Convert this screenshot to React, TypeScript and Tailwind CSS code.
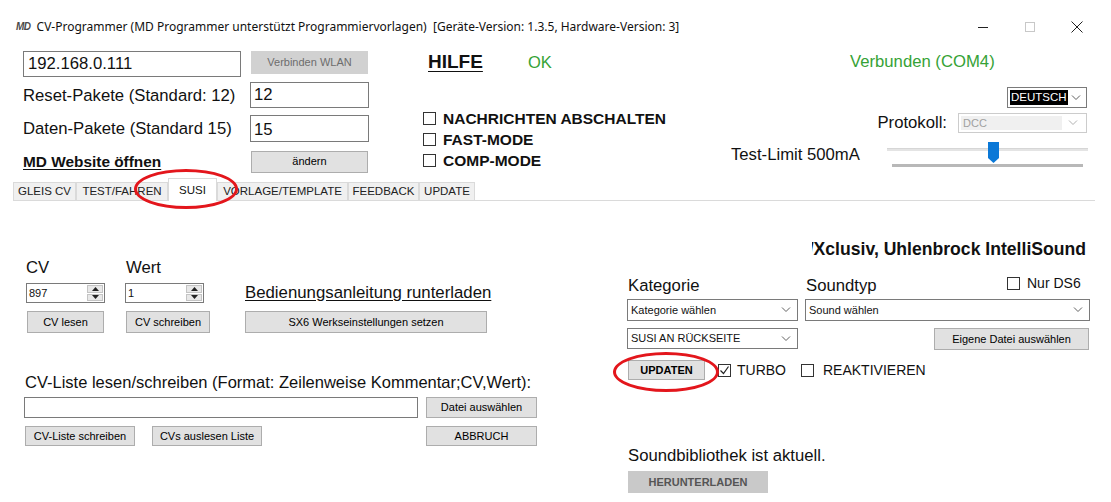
import type { ReactNode } from 'react'

function Btn({ className, children }: { className: string; children: ReactNode }) {
  return (
    <div
      className={`flex items-center justify-center border border-[#adadad] bg-[#e1e1e1] text-[11px] text-black ${className}`}
    >
      {children}
    </div>
  )
}

function Box({ checked = false }: { checked?: boolean }) {
  return (
    <span className="flex h-[13px] w-[13px] shrink-0 items-center justify-center border border-[#333] bg-white">
      {checked && (
        <svg width="11" height="11" viewBox="0 0 11 11">
          <path d="M1.5 5.5l3 3 5-7" fill="none" stroke="#222" strokeWidth="1.2" />
        </svg>
      )}
    </span>
  )
}

function Chevron({ color = '#606060' }: { color?: string }) {
  return (
    <svg width="10" height="6" viewBox="0 0 10 6" className="shrink-0">
      <path d="M1 0.5l4 4 4-4" fill="none" stroke={color} strokeWidth="1" />
    </svg>
  )
}

function Combo({ className, children }: { className: string; children: ReactNode }) {
  return (
    <div className={`flex items-center border border-[#7a7a7a] bg-white pl-[3px] pr-[6px] text-[11px] ${className}`}>
      <span className="flex-1 truncate">{children}</span>
      <Chevron />
    </div>
  )
}

function Spin({ className, value }: { className: string; value: string }) {
  return (
    <div className={`flex items-stretch border border-[#7a7a7a] bg-white text-[11px] ${className}`}>
      <span className="flex flex-1 items-center pl-[2px]">{value}</span>
      <span className="my-[1px] mr-[1px] flex w-[16px] flex-col gap-[1px]">
        <span className="flex flex-1 items-center justify-center border border-[#c4c4c4] bg-[#e8e8e8]">
          <svg width="7" height="4" viewBox="0 0 7 4">
            <path d="M0 4l3.5-4 3.5 4z" fill="#222" />
          </svg>
        </span>
        <span className="flex flex-1 items-center justify-center border border-[#c4c4c4] bg-[#e8e8e8]">
          <svg width="7" height="4" viewBox="0 0 7 4">
            <path d="M0 0l3.5 4 3.5-4z" fill="#222" />
          </svg>
        </span>
      </span>
    </div>
  )
}

const TABS = [
  { label: 'GLEIS CV', w: 'w-[63px]' },
  { label: 'TEST/FAHREN', w: 'w-[92px]' },
  { label: 'SUSI', w: 'w-[49px]', active: true },
  { label: 'VORLAGE/TEMPLATE', w: 'w-[131px]' },
  { label: 'FEEDBACK', w: 'w-[71px]' },
  { label: 'UPDATE', w: 'w-[56px]' },
]

export default function App() {
  return (
    <div className="relative h-[502px] w-[1111px] overflow-hidden bg-white font-['Liberation_Sans',Arial,sans-serif] text-[#111]">
      {/* title bar */}
      <div className="flex h-[51px] items-start">
        <span className="ml-[16px] mt-[21px] text-[10px] font-black italic leading-[12px] tracking-[-0.5px] text-[#4a4a4a]">
          MD
        </span>
        <span className="ml-[6px] mt-[19px] whitespace-nowrap font-['Noto_Sans',sans-serif] text-[12px] leading-[16px] text-[#111]">
          CV-Programmer (MD Programmer unterstützt Programmiervorlagen)&nbsp;&nbsp;[Geräte-Version: 1.3.5, Hardware-Version: 3]
        </span>
        <div className="ml-auto mr-[11px] mt-[13px] flex h-[28px]">
          <span className="flex w-[47px] items-center justify-center">
            <span className="h-px w-[10px] bg-[#222]" />
          </span>
          <span className="flex w-[47px] items-center justify-center">
            <span className="h-[10px] w-[10px] border border-[#c8c8c8]" />
          </span>
          <span className="flex w-[47px] items-center justify-center">
            <svg width="12" height="12" viewBox="0 0 12 12">
              <path d="M0.5 0.5l11 11M11.5 0.5l-11 11" stroke="#222" strokeWidth="1" />
            </svg>
          </span>
        </div>
      </div>

      {/* top section */}
      <div className="flex h-[127px]">
        <div className="ml-[23px] flex w-[346px] flex-col">
          <div className="flex h-[26px]">
            <div className="flex h-[26px] w-[218px] items-center border border-[#7a7a7a] pl-[4px] text-[16.7px]">
              192.168.0.111
            </div>
            <div className="ml-[10px] flex h-[23px] w-[117px] items-center justify-center bg-[#d1d1d1] text-[11px] text-[#6d6d6d]">
              Verbinden WLAN
            </div>
          </div>
          <div className="mt-[4px] flex items-center">
            <span className="w-[227px] whitespace-nowrap pt-[2px] text-[16.7px]">Reset-Pakete (Standard: 12)</span>
            <div className="flex h-[26px] w-[119px] items-center border border-[#7a7a7a] pl-[3px] text-[16.7px]">12</div>
          </div>
          <div className="mt-[7px] flex items-center">
            <span className="w-[227px] whitespace-nowrap text-[16.7px]">Daten-Pakete (Standard 15)</span>
            <div className="flex h-[27px] w-[119px] items-center border border-[#7a7a7a] pl-[3px] pt-[2px] text-[16.7px]">
              15
            </div>
          </div>
          <div className="mt-[8px] flex items-center">
            <span className="w-[228px] whitespace-nowrap text-[15.4px] font-bold underline underline-offset-2">
              MD Website öffnen
            </span>
            <Btn className="h-[22px] w-[117px]">ändern</Btn>
          </div>
        </div>

        <div className="ml-[54px] flex w-[260px] flex-col">
          <div className="flex h-[22px] items-center">
            <span className="ml-[5px] text-[19px] font-bold leading-[22px] underline underline-offset-[3px]">HILFE</span>
            <span className="ml-[45px] text-[16.5px] leading-[22px] text-[#36a236]">OK</span>
          </div>
          <div className="mt-[35px] flex flex-col">
            {['NACHRICHTEN ABSCHALTEN', 'FAST-MODE', 'COMP-MODE'].map((t) => (
              <div key={t} className="flex h-[21px] items-center gap-[7px]">
                <Box />
                <span className="whitespace-nowrap text-[15.5px] font-bold">{t}</span>
              </div>
            ))}
          </div>
        </div>

        <div className="ml-[48px] flex w-[359px] flex-col">
          <div className="flex h-[22px] items-center pl-[119px] text-[16.7px] text-[#36a236]">Verbunden (COM4)</div>
          <div className="mt-[14px] flex h-[21px] justify-end pr-[3px]">
            <div className="flex h-[21px] w-[80px] items-center border border-[#7a7a7a] bg-white pl-[2px] pr-[5px]">
              <span className="bg-black px-[1px] text-[11.5px] leading-[15px] text-white">DEUTSCH</span>
              <span className="ml-auto">
                <Chevron />
              </span>
            </div>
          </div>
          <div className="mt-[5px] flex h-[20px] items-center">
            <span className="w-[216px] text-right text-[16.7px]">Protokoll:</span>
            <div className="ml-[11px] flex h-[20px] w-[129px] items-center border border-[#cccccc] bg-white p-[2px]">
              <span className="flex h-full flex-1 items-center bg-[#f0f0f0] pl-[2px] text-[11px] text-[#a0a0a0]">DCC</span>
              <span className="px-[6px]">
                <Chevron color="#b0b0b0" />
              </span>
            </div>
          </div>
          <div className="mt-[9px] flex h-[25px] items-center">
            <span className="w-[156px] text-[16.7px]">Test-Limit 500mA</span>
            <svg width="201" height="26" viewBox="0 0 201 26">
              <rect x="0" y="6" width="201" height="3" fill="#e4e4e4" />
              <rect x="0" y="6" width="201" height="1" fill="#d6d6d6" />
              <rect x="5" y="22" width="191" height="3" fill="#b8b8b8" />
              <path d="M101 0h11v16l-5.5 5-5.5-5z" fill="#0a78d7" />
            </svg>
          </div>
        </div>
      </div>

      {/* tabs */}
      <div className="ml-[13px] flex h-[23px] w-[1082px] items-end border-b border-[#dadada]">
        {TABS.map((t) =>
          t.active ? (
            <div
              key={t.label}
              className={`${t.w} mb-[-1px] flex h-[23px] items-start justify-center border border-b-0 border-[#dadada] bg-white pt-[3px] text-[11.5px]`}
            >
              {t.label}
            </div>
          ) : (
            <div
              key={t.label}
              className={`${t.w} flex h-[18px] items-center justify-center border-l border-r border-t border-[#dadada] bg-[#f0f0f0] text-[11.5px] text-[#222]`}
            >
              {t.label}
            </div>
          ),
        )}
      </div>

      {/* tab content */}
      <div className="flex">
        <div className="ml-[24px] flex w-[517px] flex-col">
          <div className="mt-[57px] flex text-[16.7px] leading-[20px]">
            <span className="ml-[2px] w-[100px]">CV</span>
            <span>Wert</span>
          </div>
          <div className="mt-[5px] flex h-[20px] items-center">
            <Spin className="ml-[2px] h-[20px] w-[79px]" value="897" />
            <Spin className="ml-[20px] h-[20px] w-[79px]" value="1" />
            <span className="ml-[41px] whitespace-nowrap text-[16.8px] underline underline-offset-2">
              Bedienungsanleitung runterladen
            </span>
          </div>
          <div className="mt-[8px] flex h-[22px]">
            <Btn className="ml-[3px] h-[22px] w-[77px]">CV lesen</Btn>
            <Btn className="ml-[22px] h-[22px] w-[84px]">CV schreiben</Btn>
            <Btn className="ml-[35px] h-[22px] w-[242px]">SX6 Werkseinstellungen setzen</Btn>
          </div>
          <div className="ml-[1px] mt-[39px] whitespace-nowrap text-[16.5px] leading-[20px]">
            CV-Liste lesen/schreiben (Format: Zeilenweise Kommentar;CV,Wert):
          </div>
          <div className="mt-[5px] flex h-[21px]">
            <div className="h-[21px] w-[394px] border border-[#7a7a7a] bg-white" />
            <Btn className="ml-[8px] h-[21px] w-[111px]">Datei auswählen</Btn>
          </div>
          <div className="mt-[8px] flex h-[20px]">
            <Btn className="ml-[1px] h-[20px] w-[110px]">CV-Liste schreiben</Btn>
            <Btn className="ml-[17px] h-[20px] w-[110px]">CVs auslesen Liste</Btn>
            <Btn className="ml-[164px] h-[20px] w-[111px]">ABBRUCH</Btn>
          </div>
        </div>

        <div className="ml-[86px] flex w-[463px] flex-col">
          <div className="ml-[185px] mt-[38px] flex w-[274px] justify-end overflow-hidden whitespace-nowrap text-[17.6px] font-bold leading-[20px]">
            /Xclusiv, Uhlenbrock IntelliSound
          </div>
          <div className="mt-[17px] flex h-[20px] items-start text-[16.7px] leading-[20px]">
            <span className="ml-[1px] w-[178px]">Kategorie</span>
            <span className="w-[201px]">Soundtyp</span>
            <span className="flex items-center gap-[7px] text-[14px] leading-[14px]">
              <Box />
              Nur DS6
            </span>
          </div>
          <div className="mt-[3px] flex h-[22px]">
            <Combo className="h-[22px] w-[171px]">Kategorie wählen</Combo>
            <Combo className="ml-[7px] h-[22px] w-[285px]">Sound wählen</Combo>
          </div>
          <div className="mt-[7px] flex h-[22px]">
            <Combo className="h-[21px] w-[171px]">SUSI AN RÜCKSEITE</Combo>
            <Btn className="ml-auto mr-[1px] h-[22px] w-[155px]">Eigene Datei auswählen</Btn>
          </div>
          <div className="mt-[10px] flex h-[20px] items-center">
            <Btn className="ml-[1px] h-[20px] w-[77px] font-bold">UPDATEN</Btn>
            <span className="ml-[13px]">
              <Box checked />
            </span>
            <span className="ml-[6px] text-[14px]">TURBO</span>
            <span className="ml-[15px]">
              <Box />
            </span>
            <span className="ml-[9px] text-[14px]">REAKTIVIEREN</span>
          </div>
          <div className="ml-[1px] mt-[66px] text-[16.7px] leading-[20px]">Soundbibliothek ist aktuell.</div>
          <div className="ml-[1px] mt-[5px] flex h-[22px] w-[140px] items-center justify-center bg-[#c9c9c9] text-[11px] font-bold text-[#555]">
            HERUNTERLADEN
          </div>
        </div>
      </div>

      {/* red annotation ellipses */}
      <div className="absolute left-[134px] top-[169px] h-[40px] w-[104px] rounded-[50%] border-[3px] border-[#e3161c]" />
      <div className="absolute left-[613px] top-[352px] h-[40px] w-[106px] rounded-[50%] border-[3px] border-[#e3161c]" />
    </div>
  )
}
